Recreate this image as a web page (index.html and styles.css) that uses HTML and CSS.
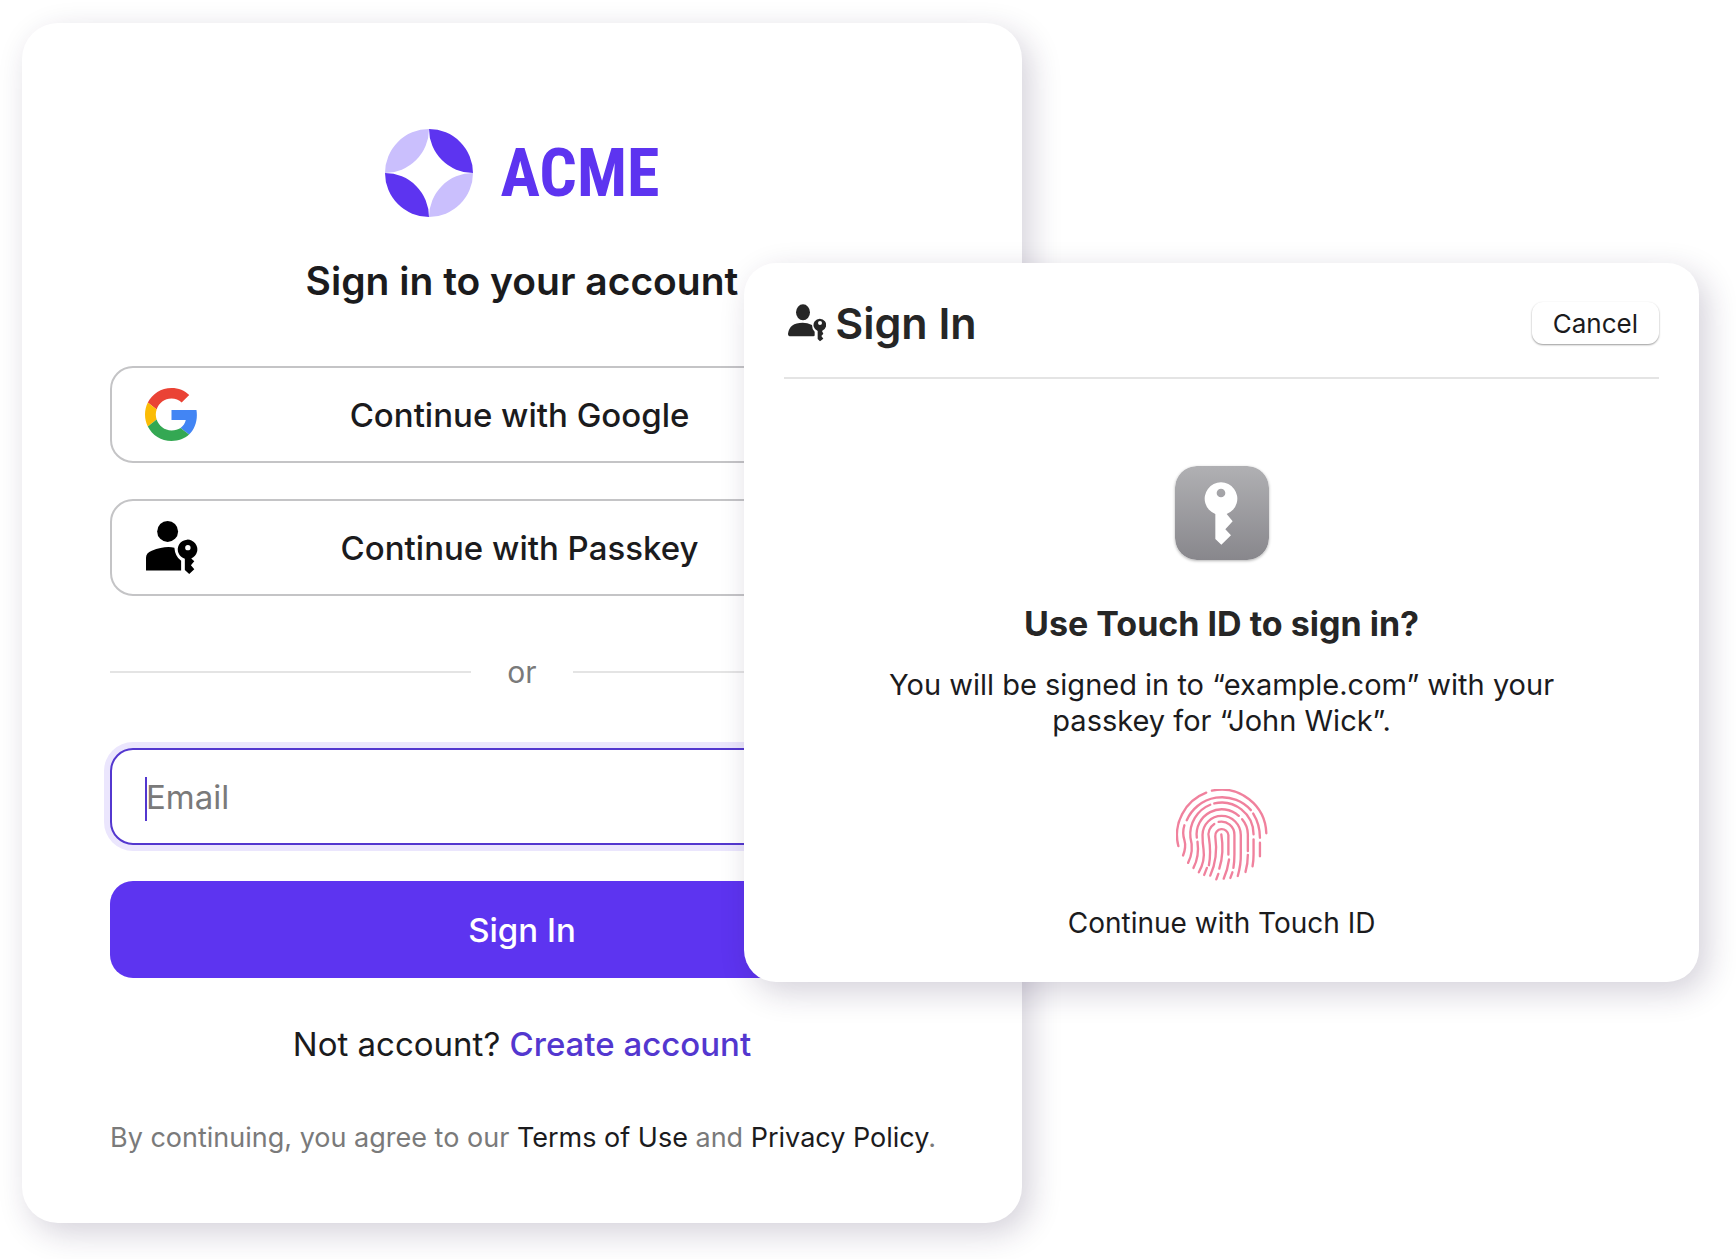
FILE: index.html
```html
<!DOCTYPE html>
<html lang="en">
<head>
    <meta charset="UTF-8">
    <meta name="viewport" content="width=device-width, initial-scale=1.0">
    <title>Sign in</title>
    <link rel="stylesheet" href="styles.css">
</head>
<body>

<div class="stage">
    <main class="card">
        <div class="brand">
            <svg class="brand-mark" viewBox="0 0 88 88" aria-hidden="true">
                <path fill="#cabffd" d="M44 0A44 44 0 0 0 0 44A44 44 0 0 0 44 0ZM88 44A44 44 0 0 0 44 88A44 44 0 0 0 88 44Z"/>
                <path fill="#5d34f0" d="M44 0A44 44 0 0 1 88 44A44 44 0 0 1 44 0ZM0 44A44 44 0 0 1 44 88A44 44 0 0 1 0 44Z"/>
            </svg>
            <span class="brand-name">ACME</span>
        </div>

        <h1>Sign in to your account</h1>

        <div class="providers">
            <button type="button" class="provider">
                <svg class="provider-icon" viewBox="0 0 48 48" aria-hidden="true">
                    <path fill="#ea4335" d="M24 9.5c3.54 0 6.71 1.22 9.21 3.6l6.85-6.85C35.9 2.38 30.47 0 24 0 14.62 0 6.51 5.38 2.56 13.22l7.98 6.19C12.43 13.72 17.74 9.5 24 9.5z"/>
                    <path fill="#4285f4" d="M46.98 24.55c0-1.57-.15-3.09-.38-4.55H24v9.02h12.94c-.58 2.96-2.26 5.48-4.78 7.18l7.73 6c4.51-4.18 7.09-10.36 7.09-17.65z"/>
                    <path fill="#fbbc05" d="M10.53 28.59c-.48-1.45-.76-2.99-.76-4.59s.27-3.14.76-4.59l-7.98-6.19C.92 16.46 0 20.12 0 24c0 3.88.92 7.54 2.56 10.78l7.97-6.19z"/>
                    <path fill="#34a853" d="M24 48c6.48 0 11.93-2.13 15.89-5.81l-7.73-6c-2.15 1.45-4.92 2.3-8.16 2.3-6.26 0-11.57-4.22-13.47-9.91l-7.98 6.19C6.51 42.62 14.62 48 24 48z"/>
                </svg>
                <span class="provider-label">Continue with Google</span>
            </button>
            <button type="button" class="provider">
                <svg class="provider-icon" viewBox="140 513 157 157" aria-hidden="true">
                    <circle cx="207" cy="544" r="31"/>
                    <path d="M143 660V622Q143 607 160 601Q198 586 227 592Q229 618 247 631V660Z"/>
                    <path fill-rule="evenodd" d="M277 624L286 632L276 644L286 656L271 670L258 658V625A29 29 0 1 1 277 624ZM267 584A8 8 0 1 0 267 600A8 8 0 1 0 267 584Z"/>
                </svg>
                <span class="provider-label">Continue with Passkey</span>
            </button>
        </div>

        <div class="divider">or</div>

        <form class="login">
            <div class="field">
                <input type="email" id="email" placeholder="Email" aria-label="Email">
                <span class="caret"></span>
            </div>
            <button type="submit" class="submit">Sign In</button>
        </form>

        <p class="signup">Not account? <a href="#">Create account</a></p>
        <p class="terms">By continuing, you agree to our <a href="#">Terms of Use</a> and <a href="#">Privacy Policy</a>.</p>
    </main>

    <section class="dialog" role="dialog" aria-labelledby="dialogTitle">
        <header class="dialog-header">
            <svg class="dialog-icon" viewBox="54 76 114 114" aria-hidden="true">
                <ellipse cx="99" cy="101" rx="21" ry="24"/>
                <path d="M62 173Q54 173 54 165Q58 132 98 132Q112 132 126 139Q126 152 134 159V170Q134 173 130 173Z"/>
                <path fill-rule="evenodd" d="M156 157L160 165L154 172L160 180L150 188L143 181V157A19 19 0 1 1 156 157ZM150 127A6 6 0 1 0 150 139A6 6 0 1 0 150 127Z"/>
            </svg>
            <h2 id="dialogTitle">Sign In</h2>
            <button type="button" class="cancel">Cancel</button>
        </header>
        <div class="dialog-body">
            <svg class="key-tile" viewBox="75 48 282 282" aria-hidden="true">
                <defs>
                    <linearGradient id="tile" x1="0" y1="0" x2="0" y2="1">
                        <stop offset="0" stop-color="#b0b0b3"/>
                        <stop offset="1" stop-color="#88878c"/>
                    </linearGradient>
                </defs>
                <rect x="75" y="48" width="282" height="282" rx="64" fill="url(#tile)"/>
                <path fill="#fff" fill-rule="evenodd" d="M196 192A49 49 0 1 1 230 192L248 214L226 238L243 256L214 284L196 267ZM213 116A13 13 0 1 0 213 142A13 13 0 1 0 213 116Z"/>
            </svg>
            <h3>Use Touch ID to sign in?</h3>
            <p class="message">You will be signed in to “example.com” with your passkey for “John Wick”.</p>
            <svg class="fingerprint" viewBox="48 45 274 274" aria-hidden="true">
                <path d="M55 215A135 135 0 0 1 138 56M155 50A134 134 0 0 1 317 177"/>
                <path d="M80 138A115 115 0 0 1 271 108M278 118Q298 150 298 190M298 205V245M73 153Q66 175 73 197Q79 218 69 243"/>
                <path d="M150 92A95 95 0 0 0 91 190Q102 230 84 265M162 88A95 95 0 0 1 279 180M279 195V240Q279 258 276 275"/>
                <path d="M110 190A75 75 0 0 1 235 125M245 135Q262 155 262 180V230M262 241Q262 268 255 292M112 202Q118 245 100 280"/>
                <path d="M116 293Q135 260 130 225Q127 205 127 182A56 56 0 0 1 241 182V235Q242 270 232 304"/>
                <path d="M162 149A38 38 0 0 0 146 190Q153 235 146 272M175 143A39 39 0 0 1 222 182V240Q222 262 219 280M216 293L210 310M140 280L132 301"/>
                <path d="M150 303Q174 250 165 186A19 19 0 0 1 204 182V240M206 255Q202 285 190 312M183 180Q192 235 177 282M174 298L168 314"/>
            </svg>
            <p class="touch-label">Continue with Touch ID</p>
        </div>
    </section>
</div>

</body>
</html>
```
FILE: styles.css
```css
* {
    box-sizing: border-box;
}

body {
    margin: 0;
    background-color: #fff;
    color: #1b1b1d;
    font-family: Inter, "Liberation Sans", sans-serif;
}

h1, h2, h3, p {
    margin: 0;
}

button, input {
    font-family: inherit;
    color: inherit;
}

a {
    color: inherit;
    text-decoration: none;
}

.stage {
    position: relative;
    padding: 23px 22px 36px;
}

.card {
    max-width: 1000px;
    padding: 106px 88px 65px;
    background-color: #fff;
    border-radius: 36px;
    box-shadow: 8px 10px 32px rgba(40, 25, 70, 0.2);
    text-align: center;
}

.brand {
    display: flex;
    justify-content: center;
    align-items: center;
    gap: 28px;
    height: 88px;
}

.brand-mark {
    width: 88px;
    height: 88px;
}

.brand-name {
    font-family: "Roboto Condensed", "Liberation Sans Narrow", "Liberation Sans", sans-serif;
    font-size: 66px;
    font-weight: 700;
    color: #5d34f0;
}

h1 {
    margin-top: 40px;
    font-size: 39px;
    font-weight: 600;
    line-height: 48px;
}

.providers {
    display: grid;
    gap: 36px;
    margin-top: 61px;
}

.provider {
    display: flex;
    align-items: center;
    height: 97px;
    padding: 0 33px;
    background-color: #fff;
    border: 2px solid #c4c4c6;
    border-radius: 23px;
    font-size: 33px;
    font-weight: 500;
}

.provider-icon {
    flex: none;
    width: 53px;
    height: 53px;
}

.provider-label {
    flex: 1;
    padding-right: 58px;
}

/* "or" with a rule on both sides */
.divider {
    display: flex;
    align-items: center;
    gap: 36px;
    margin-top: 56px;
    color: #7a7a7a;
    font-size: 30px;
    line-height: 40px;
}

.divider::before,
.divider::after {
    content: "";
    flex: 1;
    height: 2px;
    background-color: #e4e4e4;
}

.login {
    display: grid;
    gap: 36px;
    margin-top: 56px;
}

.field {
    position: relative;
}

.field input {
    display: block;
    width: 100%;
    height: 97px;
    padding: 0 34px;
    background-color: #fff;
    border: 2px solid #5337cf;
    border-radius: 23px;
    box-shadow: 0 0 0 6px #ebe6fd;
    caret-color: transparent;
    font-size: 33px;
    outline: none;
}

.field input::placeholder {
    color: #7a7a7a;
    opacity: 1;
}

.caret {
    position: absolute;
    top: 29px;
    left: 35px;
    width: 2px;
    height: 44px;
    background-color: #5337cf;
}

.submit {
    height: 97px;
    background-color: #5d34f0;
    border: 0;
    border-radius: 23px;
    color: #fff;
    font-size: 33px;
    font-weight: 500;
}

.signup {
    margin-top: 46px;
    font-size: 33px;
    line-height: 40px;
}

.signup a {
    color: #5337cf;
    font-weight: 500;
}

.terms {
    margin-top: 54px;
    color: #7a7a7a;
    font-size: 27px;
    line-height: 40px;
    white-space: nowrap;
}

.terms a {
    color: #1b1b1d;
}

/* Passkey dialog on top of the card */
.dialog {
    position: absolute;
    top: 263px;
    right: 37px;
    width: 55%;
    padding: 38px 40px 41px;
    background-color: #fff;
    border-radius: 32px;
    box-shadow: 8px 10px 32px rgba(40, 25, 70, 0.2);
}

.dialog-header {
    display: flex;
    align-items: center;
    padding-bottom: 32px;
    border-bottom: 2px solid #e4e4e4;
}

.dialog-icon {
    width: 38px;
    height: 38px;
    margin: 0 9px 0 4px;
    fill: #262626;
}

.dialog-header h2 {
    color: #262626;
    font-size: 43px;
    font-weight: 600;
    line-height: 44px;
}

.cancel {
    height: 42px;
    margin-left: auto;
    padding: 0 21px;
    background-color: #fff;
    border: 0;
    border-radius: 11px;
    box-shadow: 0 1px 2px rgba(0, 0, 0, 0.4);
    font-size: 26px;
}

.dialog-body {
    display: flex;
    flex-direction: column;
    align-items: center;
    padding-top: 87px;
    text-align: center;
}

.key-tile {
    width: 94px;
    height: 94px;
    border-radius: 22px;
    box-shadow: 0 1px 3px rgba(0, 0, 0, 0.3);
}

.dialog-body h3 {
    margin-top: 44px;
    color: #262626;
    font-size: 34px;
    font-weight: 700;
    line-height: 40px;
}

.message {
    max-width: 700px;
    margin-top: 23px;
    font-size: 29px;
    line-height: 36px;
}

.fingerprint {
    width: 92px;
    height: 92px;
    margin-top: 50px;
    fill: none;
    stroke: #f0819d;
    stroke-width: 7;
    stroke-linecap: round;
}

.touch-label {
    margin-top: 24px;
    font-size: 28px;
    line-height: 36px;
}
```
